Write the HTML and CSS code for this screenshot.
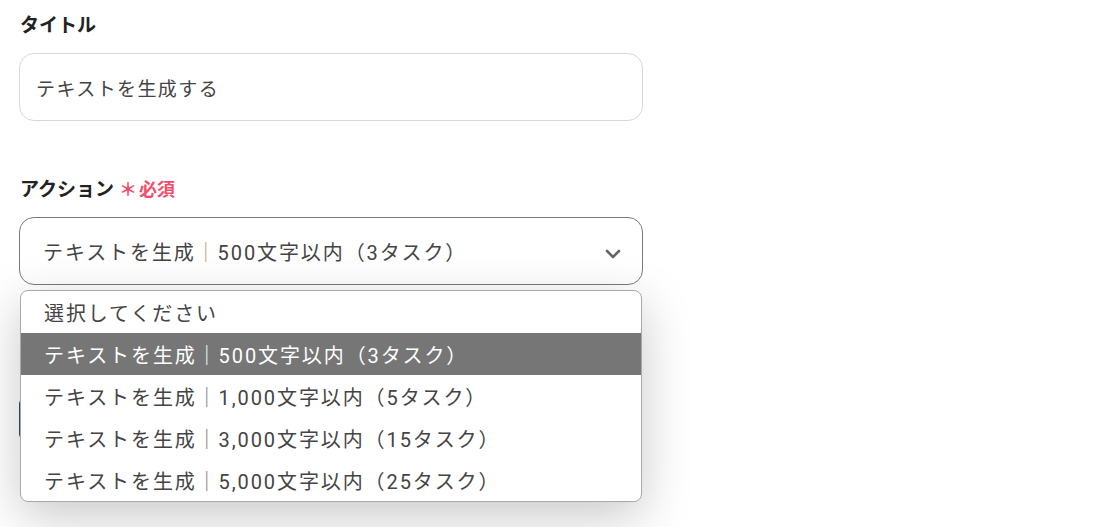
FILE: index.html
```html
<!DOCTYPE html>
<html lang="ja">
<head>
<meta charset="utf-8">
<link rel="stylesheet" href="styles.css">
</head>
<body>
<div class="form">
  <div class="field">
    <div class="label">タイトル</div>
    <div class="input">テキストを生成する</div>
  </div>
  <div class="field field-action">
    <div class="label">アクション<span class="req"><span class="ast">＊</span>必須</span></div>
    <div class="select-wrap">
      <div class="select">
        <span class="val">テキストを生成<span class="sep">｜</span>500文字以内（3タスク）</span>
        <svg class="chev" width="18" height="12" viewBox="0 0 18 12"><path d="M3 3 L9 9 L15 3" fill="none" stroke="#666" stroke-width="2.6" stroke-linecap="round" stroke-linejoin="round"/></svg>
      </div>
      <ul class="menu">
        <li>選択してください</li>
        <li class="active">テキストを生成<span class="sep">｜</span>500文字以内（3タスク）</li>
        <li>テキストを生成<span class="sep">｜</span>1,000文字以内（5タスク）</li>
        <li>テキストを生成<span class="sep">｜</span>3,000文字以内（15タスク）</li>
        <li>テキストを生成<span class="sep">｜</span>5,000文字以内（25タスク）</li>
      </ul>
    </div>
    <div class="button"></div>
  </div>
</div>
</body>
</html>
```
FILE: styles.css
```css
* { box-sizing: border-box; }
html, body { margin: 0; padding: 0; background: #fff; }
body {
  font-family: Roboto, "Noto Sans CJK JP", sans-serif;
  color: #333;
  min-height: 527px;
  overflow: hidden;
}
.form {
  width: 624px;
  margin-left: 19px;
  padding-top: 10px;
}
.field { display: flex; flex-direction: column; }
.label {
  font-family: "Noto Sans CJK JP", sans-serif;
  font-weight: 700;
  font-size: 19px;
  line-height: 28px;
  color: #222;
  margin-left: 1px;
  display: flex;
  align-items: center;
}
.input {
  margin-top: 15px;
  height: 68px;
  border: 1px solid #d5d8de;
  border-radius: 15px;
  display: flex;
  align-items: center;
  padding-left: 16px;
  font-size: 19px;
  letter-spacing: 1.4px;
  color: #444;
}
.field-action { margin-top: 53px; }
.req {
  color: #f0506e;
  font-size: 18px;
  font-weight: 700;
  margin-left: 5px;
  display: inline-flex;
  align-items: center;
}
.ast { font-size: 18px; margin-right: 2px; }
.select-wrap { position: relative; margin-top: 15px; }
.select {
  height: 68px;
  border: 1px solid #7a7a7a;
  border-radius: 15px;
  display: flex;
  align-items: center;
  justify-content: space-between;
  padding: 0 20px 0 23px;
  font-size: 20px;
  letter-spacing: 1.9px;
  color: #444;
}
.sep { color: #b89a70; }
.chev { margin-top: 6px; }
.menu {
  position: absolute;
  top: 73px;
  left: 1px;
  right: 1px;
  margin: 0;
  padding: 0;
  list-style: none;
  background: #fff;
  border: 1px solid #a9a9a9;
  border-radius: 8px;
  overflow: hidden;
  box-shadow: 0 14px 50px rgba(0, 0, 0, 0.22);
  z-index: 5;
}
.menu li {
  height: 42px;
  display: flex;
  align-items: center;
  padding-left: 23px;
  font-size: 20px;
  letter-spacing: 1.9px;
  color: #444;
}
.menu li .sep { color: #777; }
.menu li.active { background: #767676; color: #fff; }
.menu li.active .sep { color: #fff; }
.button {
  margin-top: 113px;
  width: 200px;
  height: 42px;
  background: #2f4f5c;
  border-radius: 6px;
}
```
